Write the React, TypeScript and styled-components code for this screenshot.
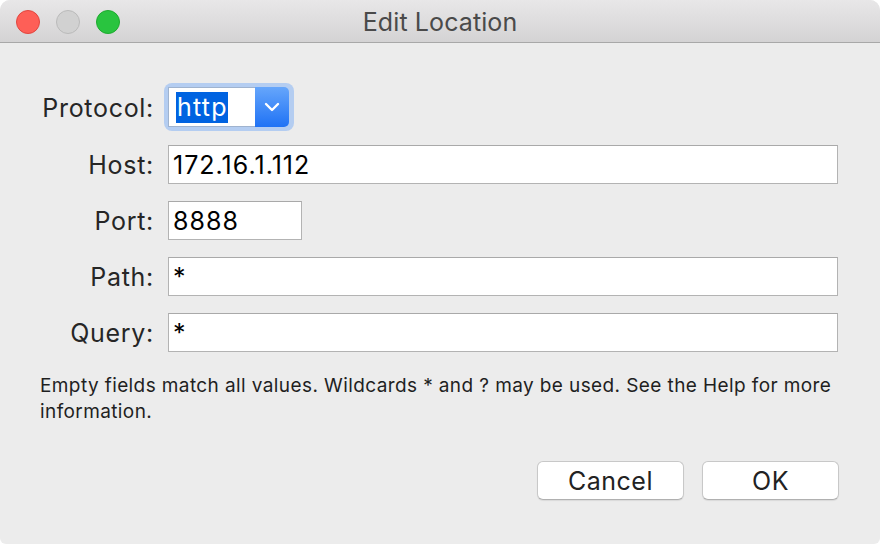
import styled, { createGlobalStyle } from "styled-components";

const GlobalStyle = createGlobalStyle`
  html, body {
    margin: 0;
    padding: 0;
    background: #ffffff;
  }
  * {
    box-sizing: border-box;
  }
`;

const Window = styled.div`
  width: 880px;
  height: 544px;
  display: flex;
  flex-direction: column;
  background: #ececec;
  border-radius: 10px 10px 6px 6px;
  overflow: hidden;
  font-family: Inter, "Liberation Sans", sans-serif;
`;

const TitleBar = styled.header`
  height: 43px;
  display: grid;
  grid-template-columns: 1fr auto 1fr;
  align-items: center;
  background: linear-gradient(#e8e7e8, #d4d3d4);
  border-bottom: 1px solid #a8a8a8;
`;

const Lights = styled.div`
  display: flex;
  gap: 16px;
  padding-left: 16px;
  padding-top: 1px;
`;

const Light = styled.span<{ $fill: string; $edge: string }>`
  width: 24px;
  height: 24px;
  border-radius: 50%;
  background: ${(p) => p.$fill};
  border: 1px solid ${(p) => p.$edge};
`;

const Title = styled.h1`
  margin: 0;
  padding-top: 2px;
  font-size: 25px;
  font-weight: 400;
  color: #4a4a4a;
  letter-spacing: 0.1px;
`;

const Content = styled.main`
  flex: 1;
  display: flex;
  flex-direction: column;
  padding: 44px 41px 0 40px;
`;

const Form = styled.div`
  display: grid;
  grid-template-columns: 114px 1fr;
  column-gap: 14px;
  row-gap: 17px;
  align-items: center;
  padding-right: 1px;
`;

const Label = styled.label`
  text-align: right;
  font-size: 25px;
  color: #262626;
  letter-spacing: 0.7px;
`;

const Field = styled.input<{ $width?: number }>`
  width: ${(p) => (p.$width ? `${p.$width}px` : "100%")};
  height: 39px;
  margin: 0;
  padding: 0 4px;
  border: 1px solid #b3b3b3;
  border-top-color: #a9a9a9;
  background: #ffffff;
  font-family: Inter, "Liberation Sans", sans-serif;
  font-size: 25px;
  letter-spacing: 1px;
  color: #000000;
  outline: none;
`;

const ComboRing = styled.div`
  width: 130px;
  height: 48px;
  margin: -4px 0 -3px -4px;
  padding: 4px 5px 4px 4px;
  border-radius: 8px;
  background: #b4cdf1;
  display: flex;
`;

const ComboText = styled.div`
  width: 87px;
  height: 40px;
  background: #ffffff;
  border: 1px solid #9fb3cf;
  border-right: none;
  display: flex;
  align-items: center;
  padding-left: 7px;
`;

const Selected = styled.span`
  background: #0063e1;
  color: #ffffff;
  font-size: 25px;
  line-height: 31px;
  letter-spacing: 1.2px;
  padding: 0 0 0 1px;
`;

const ComboButton = styled.div`
  flex: 1;
  height: 40px;
  border-radius: 0 5px 5px 0;
  background: linear-gradient(#66a6fb, #1f72f5);
  display: flex;
  align-items: center;
  justify-content: center;
`;

const Help = styled.p`
  margin: 21px 0 0;
  font-size: 19px;
  line-height: 26px;
  color: #1f1f1f;
  letter-spacing: 0.4px;
`;

const Actions = styled.div`
  display: flex;
  justify-content: flex-end;
  gap: 18px;
  margin-top: 36px;
`;

const Button = styled.button<{ $width: number }>`
  width: ${(p) => p.$width}px;
  height: 39px;
  border-radius: 6px;
  border: 1px solid #c8c8c8;
  border-bottom-color: #b0b0b0;
  background: #ffffff;
  box-shadow: 0 1px 1px rgba(0, 0, 0, 0.08);
  font-family: Inter, "Liberation Sans", sans-serif;
  font-size: 25px;
  letter-spacing: 0.5px;
  color: #222222;
  padding: 0;
`;

function App() {
  return (
    <>
      <GlobalStyle />
      <Window>
        <TitleBar>
          <Lights>
            <Light $fill="#fe5f57" $edge="#e1463f" />
            <Light $fill="#d1d1d1" $edge="#bababa" />
            <Light $fill="#29c43f" $edge="#1eaa2f" />
          </Lights>
          <Title>Edit Location</Title>
          <span />
        </TitleBar>
        <Content>
          <Form>
            <Label>Protocol:</Label>
            <ComboRing>
              <ComboText>
                <Selected>http</Selected>
              </ComboText>
              <ComboButton>
                <svg width="16" height="10" viewBox="0 0 16 10">
                  <path d="M2 2 L8 8 L14 2" fill="none" stroke="#ffffff" strokeWidth="2.4" strokeLinecap="round" strokeLinejoin="round" />
                </svg>
              </ComboButton>
            </ComboRing>
            <Label>Host:</Label>
            <Field readOnly defaultValue="172.16.1.112" />
            <Label>Port:</Label>
            <Field readOnly defaultValue="8888" $width={134} />
            <Label>Path:</Label>
            <Field readOnly defaultValue="*" />
            <Label>Query:</Label>
            <Field readOnly defaultValue="*" />
          </Form>
          <Help>
            Empty fields match all values. Wildcards * and ? may be used. See the Help for more information.
          </Help>
          <Actions>
            <Button $width={147}>Cancel</Button>
            <Button $width={137}>OK</Button>
          </Actions>
        </Content>
      </Window>
    </>
  );
}

export default App;
